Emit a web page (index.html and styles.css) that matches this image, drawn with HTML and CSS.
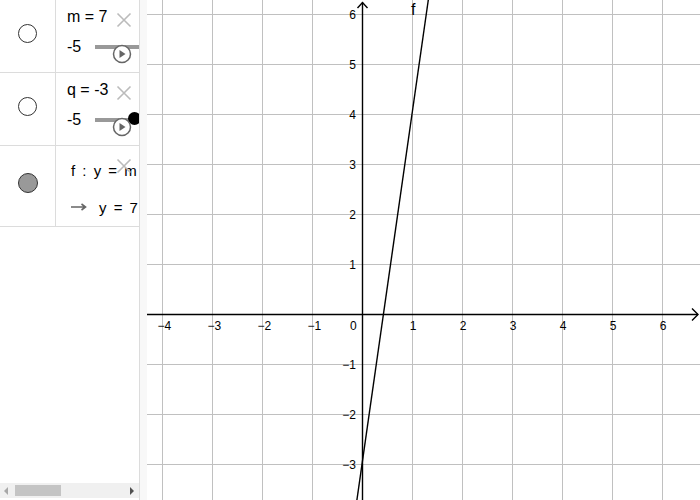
FILE: index.html
```html
<!DOCTYPE html>
<html>
<head>
<meta charset="utf-8">
<link rel="stylesheet" href="styles.css">
</head>
<body>
<div class="app">
  <div class="algebra">
    <div class="rows">
      <div class="row">
        <div class="marker"><span class="bullet"></span></div>
        <div class="content">
          <div class="def">m = 7</div>
          <div class="slider"><span class="min">-5</span><span class="track"></span></div>
          <svg class="close" width="16" height="16" viewBox="0 0 16 16"><path d="M1.5 1.5L14.5 14.5M14.5 1.5L1.5 14.5"/></svg>
          <svg class="play" width="20" height="20" viewBox="0 0 20 20"><circle cx="10" cy="10" r="8.5"/><path d="M7.5 6L13.5 10L7.5 14Z"/></svg>
        </div>
      </div>
      <div class="row">
        <div class="marker"><span class="bullet"></span></div>
        <div class="content">
          <div class="def">q = -3</div>
          <div class="slider"><span class="min">-5</span><span class="track"></span></div>
          <span class="knob"></span>
          <svg class="close" width="16" height="16" viewBox="0 0 16 16"><path d="M1.5 1.5L14.5 14.5M14.5 1.5L1.5 14.5"/></svg>
          <svg class="play" width="20" height="20" viewBox="0 0 20 20"><circle cx="10" cy="10" r="8.5"/><path d="M7.5 6L13.5 10L7.5 14Z"/></svg>
        </div>
      </div>
      <div class="row row-func">
        <div class="marker"><span class="bullet filled"></span></div>
        <div class="content content-func">
          <div class="fdef">f : y = m x + q</div>
          <div class="fout"><svg class="arrow" width="16" height="8" viewBox="0 0 16 8"><path d="M0 4H14M10.5 1L14.5 4L10.5 7"/></svg>y = 7 x − 3</div>
          <svg class="close" width="16" height="16" viewBox="0 0 16 16"><path d="M1.5 1.5L14.5 14.5M14.5 1.5L1.5 14.5"/></svg>
        </div>
      </div>
    </div>
    <div class="hscroll">
      <span class="arr-left"></span>
      <span class="thumb"></span>
      <span class="spacer"></span>
      <span class="arr-right"></span>
    </div>
  </div>
  <div class="splitter"></div>
  <div class="graphics">
    <svg width="553" height="500" viewBox="0 0 553 500">
      <g class="grid">
        <path d="M15.5 0V500M65.5 0V500M115.5 0V500M165.5 0V500M265.5 0V500M315.5 0V500M365.5 0V500M415.5 0V500M465.5 0V500M515.5 0V500"/>
        <path d="M0 14.5H553M0 64.5H553M0 114.5H553M0 164.5H553M0 214.5H553M0 264.5H553M0 364.5H553M0 414.5H553M0 464.5H553"/>
      </g>
      <g class="axes">
        <path d="M0 314.5H551M215.5 500V2.5"/>
        <path d="M545 308.5L551 314.5L545 320.5"/>
        <path d="M210.5 8L215.5 2.5L220.5 8"/>
      </g>
      <path class="fline" d="M281.3 0L209.9 500"/>
      <g class="labels">
        <text x="10.5" y="330">−4</text>
        <text x="60.5" y="330">−3</text>
        <text x="110.5" y="330">−2</text>
        <text x="160.5" y="330">−1</text>
        <text x="203" y="330">0</text>
      </g>
      <g class="labels mid">
        <text x="266" y="330">1</text>
        <text x="316" y="330">2</text>
        <text x="366" y="330">3</text>
        <text x="416" y="330">4</text>
        <text x="466" y="330">5</text>
        <text x="516" y="330">6</text>
      </g>
      <g class="labels end">
        <text x="209" y="18.8">6</text>
        <text x="209" y="68.8">5</text>
        <text x="209" y="118.8">4</text>
        <text x="209" y="168.8">3</text>
        <text x="209" y="218.8">2</text>
        <text x="209" y="268.8">1</text>
        <text x="209" y="368.8">−1</text>
        <text x="209" y="418.8">−2</text>
        <text x="209" y="468.8">−3</text>
      </g>
      <text class="flabel" x="264" y="15">f</text>
    </svg>
  </div>
</div>
</body>
</html>
```
FILE: styles.css
```css
html, body {
  margin: 0;
  padding: 0;
  background: #fff;
}
body {
  font-family: "Liberation Sans", Arial, sans-serif;
  color: #000;
}
.app {
  display: flex;
  width: 700px;
  height: 500px;
  overflow: hidden;
}
.algebra {
  width: 139px;
  height: 500px;
  border-right: 1px solid #dcdcdc;
  display: flex;
  flex-direction: column;
  overflow: hidden;
  flex: none;
}
.rows {
  flex: 1;
}
.row {
  display: flex;
  height: 72px;
  border-bottom: 1px solid #dcdcdc;
}
.row-func {
  height: 80px;
}
.marker {
  width: 56px;
  flex: none;
  border-right: 1px solid #dcdcdc;
  display: flex;
  justify-content: center;
  align-items: flex-start;
  padding-top: 24px;
  box-sizing: border-box;
}
.row-func .marker {
  padding-top: 27px;
}
.bullet {
  width: 19px;
  height: 19px;
  box-sizing: border-box;
  border: 1px solid #333;
  border-radius: 50%;
  background: #fff;
}
.bullet.filled {
  width: 20px;
  height: 20px;
  background: #999;
}
.content {
  flex: 1;
  min-width: 0;
  position: relative;
  padding: 7px 0 0 11px;
  white-space: nowrap;
}
.def, .min {
  font-size: 16px;
  line-height: 20px;
}
.slider {
  display: flex;
  align-items: center;
  margin-top: 10px;
  height: 20px;
}
.track {
  flex: none;
  width: 200px;
  height: 4px;
  margin-left: 14px;
  background: #999;
}
.knob {
  position: absolute;
  left: 72px;
  top: 39px;
  width: 13px;
  height: 13px;
  border-radius: 50%;
  background: #000;
}
.close {
  position: absolute;
  left: 60px;
  top: 12px;
}
.close path {
  stroke: #bbb;
  stroke-width: 1.6;
  fill: none;
}
.play {
  position: absolute;
  left: 56px;
  top: 44px;
}
.play circle {
  fill: #fff;
  stroke: #666;
  stroke-width: 1.5;
}
.play path {
  fill: #666;
}
.content-func {
  padding: 15px 0 0 15px;
}
.fdef, .fout {
  font-size: 15px;
  line-height: 20px;
  word-spacing: 3px;
}
.fout {
  margin-top: 17px;
}
.arrow {
  vertical-align: middle;
  margin-right: 12px;
  position: relative;
  top: -2px;
}
.arrow path {
  stroke: #666;
  stroke-width: 1.6;
  fill: none;
}
.hscroll {
  height: 15px;
  margin-bottom: 2px;
  background: #f0f0f0;
  display: flex;
  align-items: center;
}
.arr-left {
  width: 0;
  height: 0;
  margin-left: 4px;
  border-top: 4px solid transparent;
  border-bottom: 4px solid transparent;
  border-right: 4px solid #a8a8a8;
}
.thumb {
  width: 46px;
  height: 11px;
  margin-left: 7px;
  background: #c4c4c4;
}
.spacer {
  flex: 1;
}
.arr-right {
  width: 0;
  height: 0;
  margin-right: 5px;
  border-top: 4px solid transparent;
  border-bottom: 4px solid transparent;
  border-left: 4px solid #505050;
}
.splitter {
  width: 7px;
  flex: none;
  background: #f8f8f8;
}
.graphics {
  width: 553px;
  flex: none;
  height: 500px;
  background: #fff;
}
.graphics svg {
  display: block;
}
.grid path {
  stroke: #c0c0c0;
  stroke-width: 1;
  fill: none;
}
.axes path {
  stroke: #000;
  stroke-width: 1.4;
  fill: none;
}
.fline {
  stroke: #000;
  stroke-width: 1.4;
  fill: none;
}
.labels text {
  font-family: "Liberation Sans", Arial, sans-serif;
  font-size: 12px;
  fill: #000;
}
.labels.mid text {
  text-anchor: middle;
}
.labels.end text {
  text-anchor: end;
}
.flabel {
  font-family: "Liberation Sans", Arial, sans-serif;
  font-size: 16px;
  fill: #000;
}
```
